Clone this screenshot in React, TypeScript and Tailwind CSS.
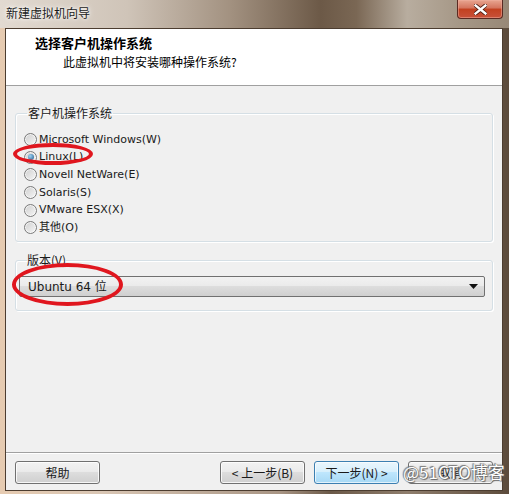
import React from "react";

const latin = "font-['Tahoma','DejaVu_Sans','Noto_Sans_CJK_SC',sans-serif]";

const osList = [
  { label: "Microsoft Windows(W)", checked: false },
  { label: "Linux(L)", checked: true },
  { label: "Novell NetWare(E)", checked: false },
  { label: "Solaris(S)", checked: false },
  { label: "VMware ESX(X)", checked: false },
  { label: "其他(O)", checked: false },
];

const Radio: React.FC<{ checked: boolean }> = ({ checked }) => (
  <span className="w-[13px] h-[13px] rounded-full border border-[#7a7a7a] bg-[linear-gradient(135deg,#cfcfcf,#f6f6f6)] shadow-[inset_0_0_0_1px_#ffffffaa] flex items-center justify-center shrink-0">
    {checked && (
      <span className="w-[6px] h-[6px] rounded-full bg-[radial-gradient(circle_at_35%_35%,#9fd4f5,#1c5a8c)]" />
    )}
  </span>
);

const WinButton: React.FC<{ primary?: boolean; children: React.ReactNode }> = ({
  primary,
  children,
}) => (
  <div
    className={
      "w-[85px] h-[23px] rounded-[3px] border flex items-center justify-center text-[12px] text-[#1a1a1a] " +
      (primary
        ? "border-[#3c7fb1] bg-[linear-gradient(#eaf6fd_0%,#d9f0fc_45%,#bee6fd_50%,#a7d9f5_100%)] shadow-[inset_0_0_0_1px_#ffffffaa]"
        : "border-[#707070] bg-[linear-gradient(#f2f2f2_0%,#ebebeb_45%,#dddddd_50%,#cfcfcf_100%)] shadow-[inset_0_0_0_1px_#ffffffcc]")
    }
  >
    {children}
  </div>
);

export default function App() {
  return (
    <div
      className={`w-[509px] h-[494px] flex flex-col relative overflow-hidden bg-[linear-gradient(90deg,#e6cbb1_0%,#d9c6b4_20%,#a89584_55%,#6b5948_65%,#8f7e6d_80%,#5c4b3b_100%)] ${latin}`}
    >
      {/* title bar */}
      <div className="h-[28px] flex justify-between items-start bg-[linear-gradient(90deg,#e2dad1_0%,#cfc4b8_25%,#a39281_45%,#6c5947_63%,#7a6754_70%,#b8ad9f_80%,#a69887_90%,#988876_100%)]">
        <span className="pl-[6px] pt-[5px] text-[12px] leading-[16px] text-[#1b1b1b] [text-shadow:0_0_6px_#ffffff,0_0_3px_#ffffff] font-['Noto_Sans_CJK_SC',sans-serif]">
          新建虚拟机向导
        </span>
        <div className="mr-[6px] w-[46px] h-[19px] rounded-b-[4px] border border-t-0 border-[#5a2a22] bg-[linear-gradient(#e8a590_0%,#d3735c_45%,#c2401f_50%,#c8513a_100%)] flex items-center justify-center shadow-[inset_0_0_0_1px_#f0b0a080]">
          <svg width="13" height="11" viewBox="0 0 13 11">
            <path
              d="M1 1 L12 10 M12 1 L1 10"
              stroke="#4a1a10"
              strokeWidth="4"
              strokeLinecap="square"
            />
            <path
              d="M1.5 1.5 L11.5 9.5 M11.5 1.5 L1.5 9.5"
              stroke="#ffffff"
              strokeWidth="2.4"
              strokeLinecap="square"
            />
          </svg>
        </div>
      </div>

      {/* client area */}
      <div className="flex-1 ml-[5px] mr-[6px] mb-[3px] border border-[#4c3d30] bg-[#f0f0f0] flex flex-col">
        {/* header */}
        <div className="h-[57px] bg-white border-b border-[#a0a0a0] pl-[29px] pt-[5px] font-['Noto_Sans_CJK_SC',sans-serif] text-[#000]">
          <div className="text-[13px] leading-[18px] font-bold">选择客户机操作系统</div>
          <div className="pl-[28px] pt-[1px] text-[12px] leading-[18px]">
            此虚拟机中将安装哪种操作系统?
          </div>
        </div>

        {/* body */}
        <div className="flex-1 px-[9px] pt-[19px] flex flex-col gap-[10px]">
          <fieldset className="border border-[#d5dfe5] rounded-[3px] h-[137px] px-[8px] pt-[10px] shadow-[inset_1px_1px_0_#ffffff,1px_1px_0_#ffffff]">
            <legend className="ml-[3px] px-[1px] text-[12px] leading-[16px] text-[#1a1a1a] font-['Noto_Sans_CJK_SC',sans-serif]">
              客户机操作系统
            </legend>
            <div className="flex flex-col">
              {osList.map((os) => (
                <div key={os.label} className="h-[17.6px] flex items-center gap-[2px] text-[11px] text-[#1a1a1a]">
                  <Radio checked={os.checked} />
                  <span className="leading-[14px]">{os.label}</span>
                </div>
              ))}
            </div>
          </fieldset>

          <fieldset className="border border-[#d5dfe5] rounded-[3px] h-[59px] pl-[3px] pr-[7px] pt-[8px] shadow-[inset_1px_1px_0_#ffffff,1px_1px_0_#ffffff]">
            <legend className="ml-[8px] text-[12px] leading-[16px] text-[#1a1a1a] font-['Noto_Sans_CJK_SC',sans-serif]">
              版本(V)
            </legend>
            <div className="h-[21px] rounded-[2px] border border-[#707070] bg-[linear-gradient(#f2f2f2_0%,#ebebeb_45%,#dddddd_50%,#cfcfcf_100%)] flex items-center justify-between pl-[8px] pr-[6px] text-[12px] text-[#1a1a1a]">
              <span className="text-[12px]">Ubuntu 64 位</span>
              <svg width="9" height="5" viewBox="0 0 9 5">
                <path d="M0 0 H9 L4.5 5 Z" fill="#111" />
              </svg>
            </div>
          </fieldset>
        </div>

        {/* footer */}
        <div className="border-t border-[#a0a0a0] h-[38px] pt-[8px] px-[9px] flex items-start shadow-[inset_0_1px_0_#ffffff] font-['Noto_Sans_CJK_SC',sans-serif]">
          <WinButton>帮助</WinButton>
          <div className="ml-auto flex gap-[9px]">
            <WinButton>&lt; 上一步(B)</WinButton>
            <WinButton primary>下一步(N) &gt;</WinButton>
            <WinButton>取消</WinButton>
          </div>
        </div>
      </div>

      {/* red annotation ellipses */}
      <div className="absolute left-[13px] top-[143px] w-[80px] h-[22px] rounded-[50%] border-[4px] border-[#e0161e]" />
      <div className="absolute left-[12px] top-[263px] w-[111px] h-[43px] rounded-[50%] border-[4px] border-[#e0161e]" />

      {/* watermark */}
      <div className="absolute left-[403px] top-[461px] whitespace-nowrap text-[17px] leading-[22px] text-white font-['Noto_Sans_CJK_SC',sans-serif] [text-shadow:0_0_1px_#555,1px_1px_1px_#666,-1px_-1px_1px_#777]">
        @51CTO博客
      </div>
    </div>
  );
}
